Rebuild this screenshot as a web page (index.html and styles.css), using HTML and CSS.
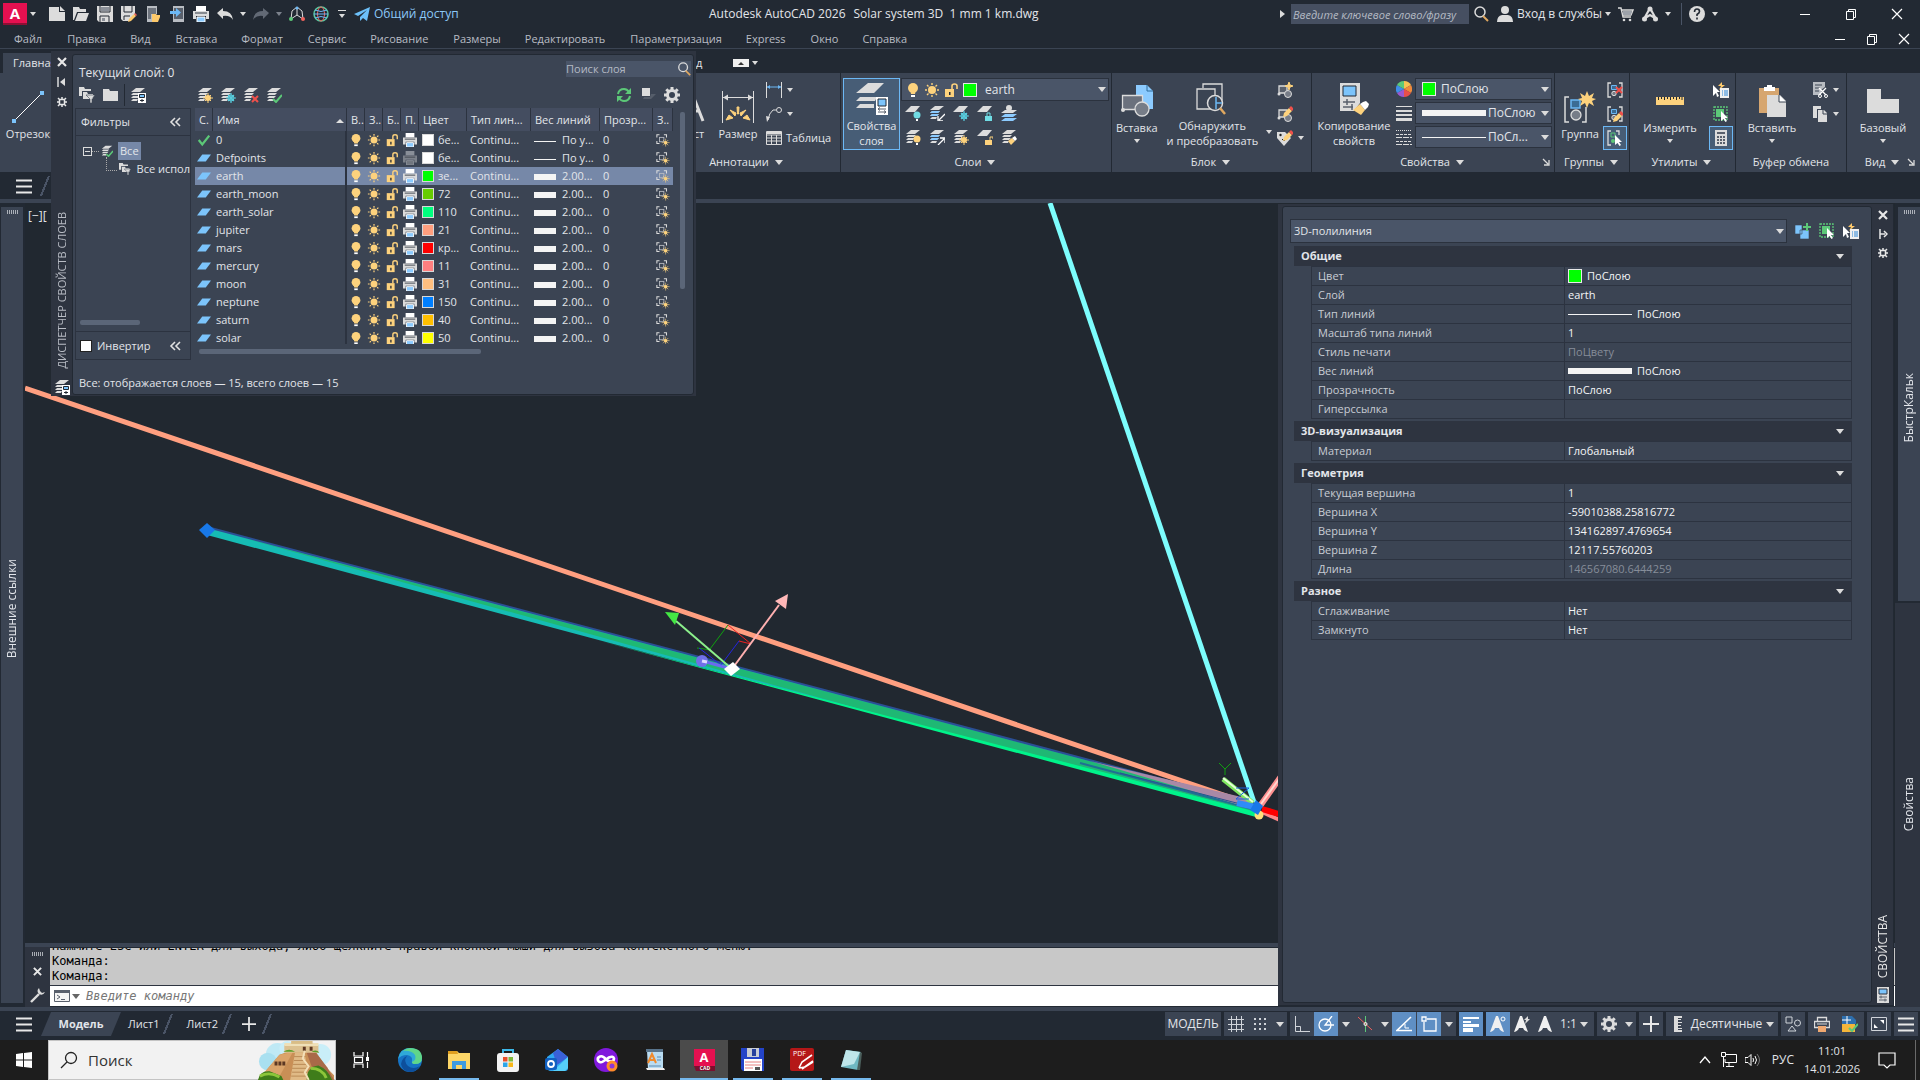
FILE: index.html
```html
<!DOCTYPE html>
<html lang="ru">
<head>
   <meta charset="UTF-8">
   <meta name="viewport" content="width=device-width, initial-scale=1.0">
   <title>Autodesk AutoCAD 2026</title>
   <link rel="stylesheet" href="styles.css">
</head>
<body>

   <!-- Набор значков -->
   <svg width="0" height="0" class="sprite">
       <symbol id="new" viewBox="0 0 16 16"><path d="M0 1h10v5h6v9H0z" fill="#dcdcdc"/><path d="M11 0l5 5h-5z" fill="#dcdcdc"/></symbol>
       <symbol id="open" viewBox="0 0 16 16"><path d="M0 1h6l1 2h6v3H4L1 14H0z" fill="#dcdcdc"/><path d="M5 7h11l-3 8H2z" fill="#dcdcdc"/></symbol>
       <symbol id="save" viewBox="0 0 16 16"><path d="M0 0h16v16H2l-2-2z" fill="#dcdcdc"/><path d="M3 0v6h10V0M3 16v-6h9v6" fill="none" stroke="#222933"/><path d="M4 1h8v4H4zM5 12h3v3H5z" fill="#8a8f98"/></symbol>
       <symbol id="saveas" viewBox="0 0 16 16"><path d="M0 0h14v8l-5 7H2l-2-2z" fill="#dcdcdc"/><path d="M3 0v6h8V0M3 14v-4h6" fill="none" stroke="#222933"/><path d="M7 16l1-3 5-5 2 2-5 5z" fill="#fdc96b"/><path d="M13 8l1-1 2 2-1 1z" fill="#f0625d"/></symbol>
       <symbol id="mobopen" viewBox="0 0 16 16"><path d="M2 0h10v8H8v8H2z" fill="#b8bcc2"/><path d="M3 2h8v6H6v5H3z" fill="#6e747e"/><path d="M7 8h4l1 1h3v2l-2 5H7z" fill="#fdc96b"/></symbol>
       <symbol id="mobsave" viewBox="0 0 16 16"><path d="M4 0h11v16H4z" fill="#b8bcc2"/><path d="M5 2h9v11H5z" fill="#59606c"/><path d="M1 5h6V2l5 4.500-5 4.500V8H1z" fill="#6cb8f5"/></symbol>
       <symbol id="print" viewBox="0 0 16 16"><path d="M3 0h10v5H3z" fill="#fff"/><path d="M0 5h16v8h-3v-3H3v3H0z" fill="#dcdcdc"/><path d="M2 7h12" stroke="#333a46"/><path d="M4 11h8v5H4z" fill="#8ccbff" stroke="#fff"/></symbol>
       <symbol id="undo" viewBox="0 0 16 16"><path d="M0 7l6-5v3q9 0 10 9-3-5-10-4v3z" fill="#dcdcdc"/></symbol>
       <symbol id="redo" viewBox="0 0 16 16"><path d="M16 7l-6-5v3Q1 5 0 14q3-5 10-4v3z" fill="#626975"/></symbol>
       <symbol id="ucs" viewBox="0 0 16 16"><path d="M8 2v7M8 9l-6 4M8 9l6 4" stroke="#dcdcdc" fill="none"/><path d="M2 13L3 5l5-4 5 4 1 8" stroke="#dcdcdc" fill="none"/><circle cx="8" cy="2" r="1.500" fill="#6cb8f5"/><circle cx="2" cy="13" r="2" fill="#5cc878"/><circle cx="14" cy="13" r="2" fill="#f0625d"/></symbol>
       <symbol id="globe" viewBox="0 0 16 16"><circle cx="8" cy="8" r="7" fill="none" stroke="#5cc8a0" stroke-width="1.500"/><ellipse cx="8" cy="8" rx="3.500" ry="7" fill="none" stroke="#f0625d"/><path d="M1 8h14M2 4q6 3 12 0M2 12q6-3 12 0" fill="none" stroke="#6cb8f5"/></symbol>
       <symbol id="plane" viewBox="0 0 16 16"><path d="M16 1L0 8l4 2 9-6-7 7v4l3-3 4 3z" fill="#6cc0fa"/></symbol>
       <symbol id="search" viewBox="0 0 16 16"><circle cx="7" cy="6" r="5" fill="none" stroke="#dcdcdc" stroke-width="1.500"/><path d="M10 10l5 5" stroke="#e0a860" stroke-width="2"/></symbol>
       <symbol id="user" viewBox="0 0 16 16"><circle cx="8" cy="4" r="4" fill="#dcdcdc"/><path d="M0 16q0-6 5-7h6q5 1 5 7z" fill="#dcdcdc"/></symbol>
       <symbol id="cart" viewBox="0 0 16 16"><path d="M0 2h3l2 9h8M4 4h11l-2 5H5" fill="none" stroke="#dcdcdc" stroke-width="1.400"/><path d="M5 5h9l-1 4H5z" fill="#9da2aa"/><circle cx="6" cy="14" r="1.300" fill="#dcdcdc"/><circle cx="12" cy="14" r="1.300" fill="#dcdcdc"/></symbol>
       <symbol id="app" viewBox="0 0 16 16"><path d="M8 2L2 13M8 2l6 11M3 12l5-3 5 3" fill="none" stroke="#dcdcdc" stroke-width="2.200"/><circle cx="8" cy="3" r="2.500" fill="#dcdcdc"/><circle cx="2.500" cy="13" r="2.500" fill="#dcdcdc"/><circle cx="13.500" cy="13" r="2.500" fill="#dcdcdc"/></symbol>
       <symbol id="help" viewBox="0 0 16 16"><circle cx="8" cy="8" r="8" fill="#dcdcdc"/><path d="M5.500 6q0-3 2.500-3t2.500 2.500Q10.500 7 8 8.500V10M8 11.500v2" fill="none" stroke="#222933" stroke-width="1.600"/></symbol>
       <symbol id="min" viewBox="0 0 12 12"><path d="M1 6.500h10" stroke="#fff"/></symbol>
       <symbol id="restore" viewBox="0 0 12 12"><path d="M1.500 3.500h7v8h-7zM3.500 3V1.500h7v8H9" fill="none" stroke="#fff"/></symbol>
       <symbol id="close" viewBox="0 0 12 12"><path d="M1 1l10 10M11 1L1 11" stroke="#fff" stroke-width="1.200"/></symbol>
       <symbol id="xbold" viewBox="0 0 10 10"><path d="M1 1l8 8M9 1L1 9" stroke="#e8e8e8" stroke-width="2.200"/></symbol>
       <symbol id="pin" viewBox="0 0 10 10"><path d="M1 0v10" stroke="#dcdcdc" stroke-width="1.500"/><path d="M3 5l5-4v8z" fill="#dcdcdc"/></symbol>
       <symbol id="pinr" viewBox="0 0 10 10"><path d="M2 0v10M2 5h5" stroke="#e8e8e8" stroke-width="1.500"/><path d="M6 2l3 3-3 3" fill="none" stroke="#e8e8e8" stroke-width="1.500"/></symbol>
       <symbol id="sprocket" viewBox="0 0 10 10"><path d="M2.500 2.500h5v5h-5zM1 1l1.500 1.500M9 1L7.500 2.500M1 9l1.500-1.500M9 9L7.500 7.500M5 0v2M5 8v2M0 5h2M8 5h2" fill="none" stroke="#e8e8e8" stroke-width="1.500"/></symbol>
       <symbol id="gear" viewBox="0 0 16 16"><path d="M8 0v16M0 8h16M2.300 2.300l11.400 11.400M13.700 2.300L2.300 13.700" stroke="#dcdcdc" stroke-width="3"/><circle cx="8" cy="8" r="4.500" fill="none" stroke="#dcdcdc" stroke-width="3"/><circle cx="8" cy="8" r="3" fill="#3b4453"/></symbol>
       <symbol id="refresh" viewBox="0 0 16 16"><path d="M2 7q1-5 6-5 3 0 5 3M14 9q-1 5-6 5-3 0-5-3" fill="none" stroke="#5cc878" stroke-width="2"/><path d="M15 1v6H9zM1 15V9h6z" fill="#5cc878"/></symbol>
       <symbol id="bulb" viewBox="0 0 16 16"><circle cx="8" cy="6" r="5" fill="#fdd27d"/><path d="M5 8h6l-1 4H6z" fill="#fdd27d"/><path d="M6 13h4v2H6z" fill="#fff"/></symbol>
       <symbol id="sun" viewBox="0 0 16 16"><circle cx="8" cy="8" r="4" fill="#fdd27d"/><path d="M8 1v2M8 13v2M1 8h2M13 8h2M3 3l1.500 1.500M11.500 11.500L13 13M13 3l-1.500 1.500M4.500 11.500L3 13" stroke="#fdd27d" stroke-width="1.400"/></symbol>
       <symbol id="lock" viewBox="0 0 16 16"><path d="M2 7h9v8H2z" fill="#fdd27d"/><path d="M9 7V4q0-2 2.500-2T14 4v3" fill="none" stroke="#fdd27d" stroke-width="1.600"/><path d="M6 10h1.500v3H6z" fill="#222933"/></symbol>
       <symbol id="sheet" viewBox="0 0 16 16"><path d="M6 4h10l-6 8H0z" fill="#7cc4fb"/></symbol>
       <symbol id="check" viewBox="0 0 16 16"><path d="M2 8l4 5 8-10" fill="none" stroke="#5cc878" stroke-width="2.600"/></symbol>
       <symbol id="vpfreeze" viewBox="0 0 16 16"><path d="M1 5V2h3M9 2h3v3M1 9v3h3" fill="none" stroke="#dcdcdc" stroke-width="1.200"/><rect x="4" y="5" width="5" height="5" fill="none" stroke="#b8bcc2"/><circle cx="11" cy="11" r="2" fill="#fdd27d"/><path d="M11 6.500v9M6.500 11h9M8 8l6 6M14 8l-6 6" stroke="#fdd27d" stroke-width=".7"/></symbol>
       <symbol id="layer" viewBox="0 0 16 16"><path d="M6 1h9l-5 4H1zM3 6h8l-2 2H1zM3 9h7l-2 2H1zM3 12h5l-1 2H1z" fill="#dcdcdc"/></symbol>
       <symbol id="onelayer" viewBox="0 0 16 16"><path d="M6 1h9l-5 6H0z" fill="#dcdcdc"/></symbol>
       <symbol id="b-sun" viewBox="0 0 16 16"><circle cx="11" cy="11" r="3" fill="#fdd27d"/><path d="M11 6v10M6 11h10M8 8l6 6M14 8l-6 6" stroke="#fdd27d"/></symbol>
       <symbol id="b-snow" viewBox="0 0 16 16"><circle cx="11" cy="11" r="3" fill="none" stroke="#58ccdc"/><path d="M11 6v10M6 11h10M8 8l6 6M14 8l-6 6" stroke="#58ccdc" stroke-width="1.200"/></symbol>
       <symbol id="b-x" viewBox="0 0 16 16"><path d="M9 9l6 6M15 9l-6 6" stroke="#f0504b" stroke-width="2"/></symbol>
       <symbol id="b-check" viewBox="0 0 16 16"><path d="M7 12l3 3 6-7" fill="none" stroke="#5cc878" stroke-width="2"/></symbol>
       <symbol id="b-bulb" viewBox="0 0 16 16"><circle cx="12" cy="10" r="3.500" fill="#fdd27d"/><path d="M11 14h2v2h-2z" fill="#fff"/></symbol>
       <symbol id="b-bulbc" viewBox="0 0 16 16"><circle cx="12" cy="10" r="3.500" fill="#70dce4"/><path d="M11 14h2v2h-2z" fill="#fff"/></symbol>
       <symbol id="b-lock" viewBox="0 0 16 16"><path d="M8 11h7v5H8z" fill="#fdd27d"/><path d="M13 11V8h3v2" fill="none" stroke="#fdd27d"/></symbol>
       <symbol id="b-lockc" viewBox="0 0 16 16"><path d="M8 11h7v5H8z" fill="#70dce4"/><path d="M10 11V8h3v3" fill="none" stroke="#70dce4"/></symbol>
       <symbol id="b-arrow" viewBox="0 0 16 16"><path d="M16 9l-6 6M9 11v5h5" fill="none" stroke="#fff" stroke-width="1.300"/></symbol>
       <symbol id="b-arrowup" viewBox="0 0 16 16"><path d="M9 16l6-6M11 9h5v5" fill="none" stroke="#fff" stroke-width="1.300"/></symbol>
       <symbol id="b-blue" viewBox="0 0 16 16"><path d="M3 9h7l-2 2H1zM3 6h8l-2 2H1z" fill="#8ccbff"/></symbol>
       <symbol id="b-brush" viewBox="0 0 16 16"><path d="M7 12l4-3 3 3-4 4z" fill="#fdd27d"/><path d="M11 9l3-2 2 3-2 2z" fill="#fff"/></symbol>
       <symbol id="b-pencil" viewBox="0 0 16 16"><path d="M6 11l1-4 5-5 3 3-5 5z" fill="#fdd27d"/><path d="M12 2l2-2 3 3-2 2z" fill="#f0504b"/></symbol>
       <symbol id="b-star" viewBox="0 0 16 16"><path d="M12 0l1 3 3 1-3 1-1 3-1-3-3-1 3-1z" fill="#fdd27d" stroke="#fdd27d"/></symbol>
       <symbol id="b-funnel" viewBox="0 0 16 16"><path d="M7 8h9l-3 4v4h-2v-4z" fill="#dcdcdc" stroke="#3b4453" stroke-width=".6"/></symbol>
       <symbol id="b-card" viewBox="0 0 16 16"><path d="M8 6h8v10H8z" fill="#fff"/><path d="M9.500 7.500h5v3h-5z" fill="#7cc4fb" stroke="#222933"/><path d="M10 13.500h4M12 12v3" stroke="#222933"/></symbol>
       <symbol id="folder" viewBox="0 0 16 16"><path d="M0 2h6l1 2h8v10H0z" fill="#dcdcdc"/></symbol>
       <symbol id="folders" viewBox="0 0 16 16"><path d="M0 0h5l1 2h6v2H3v5H0z" fill="#dcdcdc"/><path d="M4 5h4l1 2h5v5H4z" fill="#dcdcdc"/></symbol>
       <symbol id="hand" viewBox="0 0 16 16"><path d="M2 1h8v8H2z" fill="#dcdcdc"/><path d="M11 7h5l-5 5H3l1-2h6z" fill="#555d6a"/></symbol>
       <symbol id="block" viewBox="0 0 16 16"><path d="M2 4h8v7H2z" fill="#59606c" stroke="#dcdcdc" stroke-width="1.300"/><circle cx="11" cy="12" r="3.500" fill="#777d88" stroke="#dcdcdc"/><circle cx="2" cy="12" r="1.500" fill="#dcdcdc"/></symbol>
       <symbol id="tag" viewBox="0 0 16 16"><path d="M0 2h8l6 6-7 8-7-8z" fill="#dcdcdc"/><circle cx="3.500" cy="5" r="1.200" fill="#222"/><path d="M5 9l2 2 3-3" stroke="#222" fill="none"/></symbol>
       <symbol id="dim" viewBox="0 0 16 16"><path d="M.5 0v16M15.500 0v16" stroke="#dcdcdc"/><path d="M1 5h14" stroke="#6cb8f5"/><path d="M1 5l3-2v4zM15 5l-3-2v4z" fill="#6cb8f5"/></symbol>
       <symbol id="leader" viewBox="0 0 16 16"><circle cx="13" cy="4" r="2.500" fill="none" stroke="#dcdcdc"/><path d="M10 4H7q-4 3-5 10" fill="none" stroke="#dcdcdc"/><path d="M0 10l4 1-3 5z" fill="#dcdcdc"/></symbol>
       <symbol id="table" viewBox="0 0 16 16"><path d="M.5 1.500h15v13H.5zM.5 5h15M.5 8h15M.5 11h15M5.500 5v9M10.500 5v9" fill="none" stroke="#dcdcdc"/><path d="M1 2h14v2H1z" fill="#dcdcdc"/></symbol>
       <symbol id="wheel" viewBox="0 0 16 16"><path d="M8 8V0a8 8 0 0 1 7 4z" fill="#f7c252"/><path d="M8 8l7-4a8 8 0 0 1 0 8z" fill="#f08a3c"/><path d="M8 8l7 4a8 8 0 0 1-7 4z" fill="#e84f4a"/><path d="M8 8v8a8 8 0 0 1-7-4z" fill="#9b59d0"/><path d="M8 8l-7 4a8 8 0 0 1 0-8z" fill="#3f8ee8"/><path d="M8 8L1 4a8 8 0 0 1 7-4z" fill="#5cc878"/></symbol>
       <symbol id="weights" viewBox="0 0 16 16"><path d="M0 1h16v1H0zM0 5h16v2H0zM0 9h16v2H0zM0 13h16v3H0z" fill="#dcdcdc"/></symbol>
       <symbol id="types" viewBox="0 0 16 16"><path d="M0 1.500h16" stroke="#dcdcdc" stroke-dasharray="1 1"/><path d="M0 5.500h16M0 12.500h16" stroke="#dcdcdc" stroke-dasharray="3 1"/><path d="M0 8.500h16M0 15.500h16" stroke="#dcdcdc" stroke-dasharray="6 1"/></symbol>
       <symbol id="grp" viewBox="0 0 16 16"><path d="M4 1H1v14h3M12 1h3v14h-3" fill="none" stroke="#dcdcdc" stroke-width="1.300"/><path d="M4.500 3.500h5v4h-5z" fill="#3b6c94" stroke="#6cb8f5"/><circle cx="7" cy="11.500" r="2.200" fill="#777d88" stroke="#dcdcdc"/></symbol>
       <symbol id="grpsel" viewBox="0 0 16 16"><path d="M4 1H1v14h3M9 1h3v4" fill="none" stroke="#dcdcdc" stroke-width="1.300"/><path d="M4 3h4v4H4z" fill="none" stroke="#5cc878"/><circle cx="6" cy="11" r="2" fill="#5cc878"/></symbol>
       <symbol id="b-cursor" viewBox="0 0 16 16"><path d="M8 5v10l2.500-2 2 3 1.500-1-2-3h3z" fill="#fff"/></symbol>
       <symbol id="quick-props" viewBox="0 0 16 16"><path d="M0 3v11l3-3 1 4 2-1-2-4h3z" fill="#fff"/><path d="M9 0L5 4h3L6 8l6-5H9z" fill="#fdc96b"/><path d="M7 6h9v10H7z" fill="#f0f0f0"/><path d="M9 9h1M9 11h1M9 13h1M11 9h4M11 11h4M11 13h4" stroke="#2b86d8"/></symbol>
       <symbol id="selall" viewBox="0 0 16 16"><path d="M1 1h13v13H1z" fill="none" stroke="#5cc878" stroke-width="1.300" stroke-dasharray="2 1"/><path d="M3 3h8v8H3z" fill="#5cc878"/></symbol>
       <symbol id="addsel" viewBox="0 0 16 16"><path d="M0 2h7v9H0zM5 7h9v9H5z" fill="#7cc4fb" stroke="#3b4453" stroke-width=".6"/><path d="M12 0v8M8 4h8" stroke="#5cc878" stroke-width="2"/></symbol>
       <symbol id="calc" viewBox="0 0 16 16"><path d="M2 0h12v16H2z" fill="#dcdcdc"/><path d="M4 2h8v2H4zM4 6h2v2H4zM7 6h2v2H7zM10 6h2v2h-2zM4 9h2v2H4zM7 9h2v2H7zM10 9h2v2h-2zM4 12h2v2H4zM7 12h2v2H7zM10 12h2v2h-2z" fill="#59606c"/></symbol>
       <symbol id="cut" viewBox="0 0 16 16"><path d="M1 0h12v5l-4 3v5H1z" fill="#b8bcc2"/><path d="M3 3h7M3 6h5M3 9h4" stroke="#3b4453"/><path d="M7 6l7 7M14 6l-7 7" stroke="#fff" stroke-width="1.400"/><circle cx="8" cy="14" r="1.500" fill="none" stroke="#fff"/><circle cx="14" cy="14" r="1.500" fill="none" stroke="#fff"/></symbol>
       <symbol id="copy" viewBox="0 0 16 16"><path d="M1 0h8v3H5v9H1z" fill="#dcdcdc"/><path d="M6 4h6l3 3v9H6z" fill="#dcdcdc"/><path d="M11 4v4h4" fill="none" stroke="#3b4453"/></symbol>
       <symbol id="corner" viewBox="0 0 8 8"><path d="M1 1l5 5M7 2v5H2" fill="none" stroke="#dcdcdc" stroke-width="1.300"/></symbol>
       <symbol id="burger" viewBox="0 0 16 16"><path d="M0 2.500h16M0 8.500h16M0 14.500h16" stroke="#e8e8e8" stroke-width="2"/></symbol>
       <symbol id="chev" viewBox="0 0 12 10"><path d="M6 1L2 5l4 4M11 1L7 5l4 4" fill="none" stroke="#e0e0e0" stroke-width="1.600"/></symbol>
       <symbol id="palette" viewBox="0 0 12 16"><path d="M0 0h12v16H0z" fill="#dcdcdc"/><path d="M2 2h8v5H2z" fill="#7cc4fb" stroke="#2e3440"/><path d="M2 10h8M2 13h8M4 8.500v3M8 11.500v3" stroke="#59606c"/></symbol>
       <symbol id="wrench" viewBox="0 0 16 16"><path d="M1 15l8-8" stroke="#dcdcdc" stroke-width="2.400"/><path d="M9 1q-3 3 0 6 4 2 6-2l-3 1-2-2z" fill="#dcdcdc"/></symbol>
       <symbol id="prompt" viewBox="0 0 16 12"><path d="M.5.5h15v11H.5z" fill="#f4f4f4" stroke="#59606c"/><path d="M0 0h16v3H0z" fill="#59606c"/><path d="M3 5l3 2-3 2M7 9.500h4" fill="none" stroke="#59606c"/></symbol>
       <!-- строка состояния -->
       <symbol id="s-grid" viewBox="0 0 16 16"><path d="M3.500 0v16M8.500 0v16M13.500 0v16M0 3.500h16M0 8.500h16M0 13.500h16" stroke="#d0d4da"/></symbol>
       <symbol id="s-dots" viewBox="0 0 16 16"><path d="M2 3h12M2 8h12M2 13h12" stroke="#d0d4da" stroke-width="2" stroke-dasharray="2 3"/></symbol>
       <symbol id="s-ortho" viewBox="0 0 16 16"><path d="M1.500 0v15.500H16M1.500 10.500h5v5" fill="none" stroke="#d0d4da"/></symbol>
       <symbol id="s-polar" viewBox="0 0 16 16"><circle cx="7" cy="9" r="6" fill="none" stroke="#fff" stroke-width="1.300"/><path d="M14 0L7 9h9" fill="none" stroke="#fff" stroke-width="1.300"/></symbol>
       <symbol id="s-iso" viewBox="0 0 16 16"><path d="M8.500 0v16" stroke="#5cc878"/><path d="M1 1l14 13" stroke="#f0625d"/><circle cx="8.500" cy="8" r="1.500" fill="none" stroke="#fff"/></symbol>
       <symbol id="s-track" viewBox="0 0 16 16"><path d="M15 1L1 14.500h15" fill="none" stroke="#fff" stroke-width="1.600"/><path d="M9 8v4h4" fill="none" stroke="#fff"/></symbol>
       <symbol id="s-osnap" viewBox="0 0 16 16"><path d="M1 1h4v4H1zM6 3h9v12H3V6" fill="none" stroke="#fff" stroke-width="1.300"/></symbol>
       <symbol id="s-lwt" viewBox="0 0 16 16"><path d="M0 1h16v2H0zM0 5h8v2H0zM0 8h16v3H0zM0 12h10v4H0z" fill="#fff"/></symbol>
       <symbol id="s-ann" viewBox="0 0 16 16"><path d="M6 0h2l6 16q-4-1-5-4H5q-1 3-5 4z" fill="#f0f0f0"/></symbol>
       <symbol id="s-ring" viewBox="0 0 16 16"><circle cx="13" cy="3" r="2" fill="none" stroke="#fff"/></symbol>
       <symbol id="s-flash" viewBox="0 0 16 16"><path d="M14 0l-4 4h2l-1 4 5-5h-2z" fill="#dcdcdc"/></symbol>
       <symbol id="s-plus" viewBox="0 0 16 16"><path d="M8 0v16M0 8h16" stroke="#e8e8e8" stroke-width="2"/></symbol>
       <symbol id="s-ruler" viewBox="0 0 8 16"><path d="M0 0h8v2H4v1h3v1H4v2h4v1H4v2h3v1H4v2h4v1H4v1h4v2H0z" fill="#dcdcdc"/></symbol>
       <symbol id="s-iso2" viewBox="0 0 16 16"><path d="M1 1h6v6H1zM7 10l-4 5h8z" fill="none" stroke="#d0d4da"/><circle cx="12.500" cy="7" r="3" fill="none" stroke="#d0d4da"/></symbol>
       <symbol id="s-print" viewBox="0 0 16 16"><path d="M3.500 1.500h9v4h-9zM.5 5.500h15v6H.5z" fill="none" stroke="#dcdcdc" stroke-width="1.300"/><path d="M3 8h10" stroke="#dcdcdc"/><path d="M4 10h8v6H4z" fill="#f0a870"/></symbol>
       <symbol id="s-dwg" viewBox="0 0 16 16"><path d="M0 0h10l4 4v4H0z" fill="#2d6fae"/><path d="M0 8h13v8H0z" fill="#f4b63a"/><path d="M5 0v8M0 4h9" stroke="#fff"/><path d="M7 12l3 3 6-7" fill="none" stroke="#5cc878" stroke-width="2"/></symbol>
       <symbol id="s-full" viewBox="0 0 16 16"><path d="M.5 1.500h15v13H.5z" fill="none" stroke="#d0d4da"/><path d="M9 4h4v4zM3 8v4h4z" fill="#fff"/></symbol>
       <!-- крупные -->
       <symbol id="L-line" viewBox="0 0 32 32"><path d="M2 30L30 2" stroke="#fff"/><path d="M0 28h4v4H0zM28 0h4v4h-4z" fill="#7cc4fb"/></symbol>
       <symbol id="L-text" viewBox="0 0 32 32"><path d="M4 30L15 2h3l11 28M9 20h15" fill="none" stroke="#dcdcdc" stroke-width="3"/></symbol>
       <symbol id="L-dim" viewBox="0 0 32 32"><path d="M.5 0v32M31.500 0v32M1 6.500h30" stroke="#dcdcdc"/><path d="M1 6.500l5-3v6zM31 6.500l-5-3v6z" fill="#dcdcdc"/><path d="M4 29l7-2-4-3zM28 29l-7-2 4-3zM8 19l5 6 1-3zM24 19l-5 6-1-3zM15 16h2l-.5 7h-1z" fill="#fdd27d" stroke="#fdd27d"/></symbol>
       <symbol id="L-layers" viewBox="0 0 32 32"><path d="M12 0h16L18 10H0zM4 14h17l-2 4H0zM4 21h14v4H0z" fill="#dcdcdc"/><path d="M20 14h12v18H20z" fill="#fff"/><path d="M22 16h8v7h-8z" fill="#7cc4fb" stroke="#222933"/><path d="M22 26h8M24 24.500L22 26l2 1.500M22 29h8M28 27.500l2 1.500-2 1.500" stroke="#59606c" fill="none"/></symbol>
       <symbol id="L-insert" viewBox="0 0 32 32"><path d="M15 0h11l6 6v18H15z" fill="#8ccbff"/><path d="M26 0v6h6" fill="none" stroke="#2e6c9c"/><path d="M1.500 10.500h20v14h-20z" fill="#6b717d" stroke="#dcdcdc" stroke-width="1.300"/><circle cx="21" cy="24" r="7" fill="#777d88" stroke="#dcdcdc" stroke-width="1.300"/><circle cx="2" cy="25" r="2" fill="#dcdcdc"/></symbol>
       <symbol id="L-detect" viewBox="0 0 32 32"><path d="M7 5V1h19v16M1 6h18v20H1z" fill="none" stroke="#dcdcdc" stroke-width="1.300"/><circle cx="19" cy="20" r="7.500" fill="#3b4453" stroke="#dcdcdc" stroke-width="1.500"/><path d="M20 14v12M20 20h6" stroke="#6cb8f5" stroke-width="1.500"/><path d="M24 25l5 6" stroke="#e0a860" stroke-width="2.500"/></symbol>
       <symbol id="L-match" viewBox="0 0 32 32"><path d="M2 0h20v20l-6 8H2z" fill="#dcdcdc"/><path d="M5 3h13v10H5z" fill="#7cc4fb" stroke="#222933"/><path d="M5 19h12M5 24h10M9 16v6M14 21v6" stroke="#59606c" stroke-width="1.500"/><path d="M15 27l7-6 5 6-4 5z" fill="#fdd27d"/><path d="M22 21l3-2 3-1 3 3-1 3-3 3z" fill="#fff"/></symbol>
       <symbol id="L-group" viewBox="0 0 32 32"><path d="M5 6H1v25h4M18 31h4V16" fill="none" stroke="#dcdcdc" stroke-width="1.500"/><path d="M7 9h9v8H7z" fill="#3b6c94" stroke="#6cb8f5" stroke-width="1.500"/><circle cx="12" cy="24" r="5" fill="#777d88" stroke="#dcdcdc" stroke-width="1.300"/><path d="M23 0l2 5 5-3-2 5 4 1-4 2 2 5-5-3-2 5-2-5-5 3 2-5-4-2 4-1-2-5 5 3z" fill="#fdd27d"/></symbol>
       <symbol id="L-ruler" viewBox="0 0 32 32"><path d="M2 12h28v8H2z" fill="#fdd27d"/><path d="M4.500 12v3M7.500 12v2M10.500 12v3M13.500 12v2M16.500 12v3M19.500 12v2M22.500 12v3M25.500 12v2M28 12v3" stroke="#222933"/></symbol>
       <symbol id="L-paste" viewBox="0 0 32 32"><path d="M3 3h20v25H3z" fill="#d6a670"/><path d="M8 2h3V0h5v2h3v4H8z" fill="#fff"/><path d="M11 10h13l6 6v16H11z" fill="#dcdcdc"/><path d="M23 10v7h7" fill="#fff" stroke="#3b4453"/></symbol>
       <symbol id="L-base" viewBox="0 0 32 32"><path d="M0 4h14v10h18v14H0z" fill="#dcdcdc"/></symbol>
   </svg>

   <header class="titlebar">
       <div class="quick">
           <button class="logo" aria-label="Приложение">A</button><i class="caret logo-caret"></i>
           <button class="cell"><svg><use href="#new"/></svg></button>
           <button class="cell"><svg><use href="#open"/></svg></button>
           <button class="cell"><svg><use href="#save"/></svg></button>
           <button class="cell"><svg><use href="#saveas"/></svg></button>
           <button class="cell"><svg><use href="#mobopen"/></svg></button>
           <button class="cell"><svg><use href="#mobsave"/></svg></button>
           <button class="cell"><svg><use href="#print"/></svg></button>
           <button class="cell"><svg><use href="#undo"/></svg></button><i class="caret"></i>
           <button class="cell"><svg><use href="#redo"/></svg></button><i class="caret dim"></i>
           <button class="cell"><svg><use href="#ucs"/></svg></button>
           <button class="cell"><svg><use href="#globe"/></svg></button><i class="caret more"></i>
           <button class="share"><svg><use href="#plane"/></svg>Общий доступ</button>
       </div>
       <div class="doc-title"><span>Autodesk AutoCAD 2026</span><span>Solar system 3D&nbsp; 1 mm 1 km.dwg</span></div>
       <div class="info">
           <i class="tri-right"></i>
           <input type="text" class="help-search" placeholder="Введите ключевое слово/фразу" aria-label="Поиск в справке">
           <button class="cell"><svg><use href="#search"/></svg></button>
           <button class="signin"><svg><use href="#user"/></svg>Вход в службы<i class="caret"></i></button>
           <button class="cell"><svg><use href="#cart"/></svg></button>
           <button class="cell"><svg><use href="#app"/></svg></button><i class="caret"></i>
           <span class="vsep"></span>
           <button class="cell"><svg><use href="#help"/></svg></button><i class="caret"></i>
       </div>
       <div class="win-controls">
           <button aria-label="Свернуть"><svg><use href="#min"/></svg></button>
           <button aria-label="Восстановить"><svg><use href="#restore"/></svg></button>
           <button aria-label="Закрыть"><svg><use href="#close"/></svg></button>
       </div>
   </header>

   <nav class="menubar">
       <button>Файл</button><button>Правка</button><button>Вид</button><button>Вставка</button><button>Формат</button><button>Сервис</button><button>Рисование</button><button>Размеры</button><button>Редактировать</button><button>Параметризация</button><button>Express</button><button>Окно</button><button>Справка</button>
       <div class="doc-controls">
           <button aria-label="Свернуть"><svg><use href="#min"/></svg></button>
           <button aria-label="Восстановить"><svg><use href="#restore"/></svg></button>
           <button aria-label="Закрыть"><svg><use href="#close"/></svg></button>
       </div>
   </nav>

   <div class="ribbon-tabs">
       <button class="tab">Главная</button>
       <div class="tabs-end"><span>д</span><button class="collapse" aria-label="Свернуть ленту"></button><i class="caret"></i></div>
   </div>

   <div class="ribbon">
       <section class="panel draw">
           <div class="panel-body"><button class="big"><svg><use href="#L-line"/></svg>Отрезок</button></div>
       </section>
       <section class="panel annot">
           <div class="panel-body">
               <button class="big"><svg><use href="#L-text"/></svg>Текст</button>
               <button class="big"><svg><use href="#L-dim"/></svg>Размер</button>
               <div class="stack">
                   <button class="small"><svg><use href="#dim"/></svg><i class="caret"></i></button>
                   <button class="small"><svg><use href="#leader"/></svg><i class="caret"></i></button>
                   <button class="small"><svg><use href="#table"/></svg><span>Таблица</span></button>
               </div>
           </div>
           <div class="panel-title">Аннотации<i class="caret wide"></i></div>
       </section>
       <section class="panel layers">
           <div class="panel-body">
               <button class="big on"><svg><use href="#L-layers"/></svg>Свойства<br>слоя</button>
               <div class="layer-tools">
                   <div class="combo layer-combo">
                       <svg><use href="#bulb"/></svg><svg><use href="#sun"/></svg><svg><use href="#lock"/></svg><b class="swatch"></b>
                       <select aria-label="Слой"><option>earth</option></select><i class="caret wide"></i>
                   </div>
                   <div class="icon-row">
                       <button><svg><use href="#onelayer"/><use href="#b-bulbc"/></svg></button>
                       <button><svg><use href="#layer"/><use href="#b-blue"/><use href="#b-arrow"/></svg></button>
                       <button><svg><use href="#onelayer"/><use href="#b-snow"/></svg></button>
                       <button><svg><use href="#onelayer"/><use href="#b-lockc"/></svg></button>
                       <button><svg viewBox="0 0 16 16"><path d="M4 9h12l-4 3H0zM4 13h12l-4 3H0z" fill="#8ccbff"/><path d="M4 5h12l-4 3H0z" fill="#dcdcdc"/><circle cx="8" cy="3" r="3" fill="#dcdcdc"/></svg></button>
                   </div>
                   <div class="icon-row">
                       <button><svg><use href="#layer"/><use href="#b-bulb"/></svg></button>
                       <button><svg><use href="#layer"/><use href="#b-blue"/><use href="#b-arrowup"/></svg></button>
                       <button><svg><use href="#layer"/><use href="#b-sun"/></svg></button>
                       <button><svg><use href="#onelayer"/><use href="#b-lock"/></svg></button>
                       <button><svg><use href="#layer"/><use href="#b-brush"/></svg></button>
                   </div>
               </div>
           </div>
           <div class="panel-title">Слои<i class="caret wide"></i></div>
       </section>
       <section class="panel block">
           <div class="panel-body">
               <button class="big"><svg><use href="#L-insert"/></svg>Вставка<i class="caret"></i></button>
               <button class="big"><svg><use href="#L-detect"/></svg>Обнаружить<br>и преобразовать</button>
               <i class="caret detect-caret"></i>
               <div class="stack">
                   <button class="small"><svg><use href="#block"/><use href="#b-star"/></svg></button>
                   <button class="small"><svg><use href="#block"/><use href="#b-pencil"/></svg></button>
                   <button class="small"><svg><use href="#tag"/><use href="#b-pencil"/></svg><i class="caret"></i></button>
               </div>
           </div>
           <div class="panel-title">Блок<i class="caret wide"></i></div>
       </section>
       <section class="panel properties">
           <div class="panel-body">
               <button class="big"><svg><use href="#L-match"/></svg>Копирование<br>свойств</button>
               <div class="prop-rows">
                   <div class="prop-row"><svg><use href="#wheel"/></svg><div class="combo"><b class="swatch"></b><select aria-label="Цвет объекта"><option>ПоСлою</option></select><i class="caret wide"></i></div></div>
                   <div class="prop-row"><svg><use href="#weights"/></svg><div class="combo"><b class="stroke thick"></b><select aria-label="Вес линий"><option>ПоСлою</option></select><i class="caret wide"></i></div></div>
                   <div class="prop-row"><svg><use href="#types"/></svg><div class="combo"><b class="stroke"></b><select aria-label="Тип линий"><option>ПоСл...</option></select><i class="caret wide"></i></div></div>
               </div>
           </div>
           <div class="panel-title">Свойства<i class="caret wide"></i><svg class="launcher"><use href="#corner"/></svg></div>
       </section>
       <section class="panel groups">
           <div class="panel-body">
               <button class="big"><svg><use href="#L-group"/></svg>Группа</button>
               <div class="stack">
                   <button class="small"><svg><use href="#grp"/><use href="#b-x" y="-4"/></svg></button>
                   <button class="small"><svg><use href="#grp"/><use href="#b-pencil" y="5"/></svg></button>
                   <button class="small on"><svg><use href="#grpsel"/><use href="#b-cursor"/></svg></button>
               </div>
           </div>
           <div class="panel-title">Группы<i class="caret wide"></i></div>
       </section>
       <section class="panel utils">
           <div class="panel-body">
               <button class="big"><svg><use href="#L-ruler"/></svg>Измерить<i class="caret"></i></button>
               <div class="stack">
                   <button class="small"><svg><use href="#quick-props"/></svg></button>
                   <button class="small"><svg><use href="#selall"/><use href="#b-cursor"/></svg></button>
                   <button class="small on"><svg><use href="#calc"/></svg></button>
               </div>
           </div>
           <div class="panel-title">Утилиты<i class="caret wide"></i></div>
       </section>
       <section class="panel clipboard">
           <div class="panel-body">
               <button class="big"><svg><use href="#L-paste"/></svg>Вставить<i class="caret"></i></button>
               <div class="stack">
                   <button class="small"><svg><use href="#cut"/></svg><i class="caret"></i></button>
                   <button class="small"><svg><use href="#copy"/></svg><i class="caret"></i></button>
               </div>
           </div>
           <div class="panel-title">Буфер обмена</div>
       </section>
       <section class="panel view">
           <div class="panel-body"><button class="big"><svg><use href="#L-base"/></svg>Базовый<i class="caret"></i></button></div>
           <div class="panel-title">Вид<i class="caret wide"></i><svg class="launcher"><use href="#corner"/></svg></div>
       </section>
   </div>

   <div class="file-tabs"><svg><use href="#burger"/></svg><i class="slash"></i></div>

   <main class="workspace">
       <aside class="dock left"><i class="grip"></i><span class="vert">Внешние ссылки</span></aside>

       <div class="center">
           <div class="viewport">
               <span class="vp-label">[−][</span>
               <svg class="scene">
                   <g transform="translate(-25 -203)" fill="none">
                       <path d="M1050 203L1256 808" stroke="#7dfdfd" stroke-width="5"/>
                       <path d="M25 388L640 597 1256 806" stroke="#ff9f80" stroke-width="5"/>
                       <path d="M207 527L1256 804v12L207 535z" fill="#16bcb4"/>
                       <path d="M240 537L1256 805v7L900 720 640 648z" fill="#1fb874"/>
                       <path d="M600 641L1256 812v5z" fill="#00f48a"/>
                       <path d="M207 527L1256 804" stroke="#2b4f94" stroke-width="2"/>
                       <path d="M1080 763L1256 810" stroke="#1f6f94" stroke-width="2"/>
                       <path d="M1090 761L1250 799v9z" fill="#a889a6"/>
                       <path d="M1120 773L1256 808" stroke="#2b4f94" stroke-width="1"/>
                       <path d="M207 523l8 7-8 8-8-8z" fill="#1878e8"/>
                       <!-- гизмо -->
                       <path d="M710 649L728 625" stroke="#0fa00f"/>
                       <path d="M697 648l14 2" stroke="#0fa00f"/>
                       <path d="M728 625l23 19-12-3" stroke="#f02020"/>
                       <path d="M739 641l-18 24-22-17" stroke="#2424e0"/>
                       <path d="M732 669L676 621" stroke="#8cf08c" stroke-width="2"/>
                       <path d="M665 612l14 1-4 12z" fill="#44e844"/>
                       <path d="M732 669L779 605" stroke="#ffb0b0" stroke-width="2"/>
                       <path d="M788 594l-2 15-11-8z" fill="#ffb8b8"/>
                       <path d="M732 669l-26-7" stroke="#6a6af0" stroke-width="3"/>
                       <circle cx="702" cy="661" r="6" fill="#7070e8"/>
                       <path d="M702 661l5 1" stroke="#dcdcff" stroke-width="3"/>
                       <path d="M733 662l7 7-9 7-7-7z" fill="#fff"/>
                       <!-- начало координат -->
                       <path d="M1219 763l6 6 6-6M1225 769v6" stroke="#10a010"/>
                       <path d="M1223 779l30 24" stroke="#80e860" stroke-width="5"/>
                       <path d="M1223 778l30 24" stroke="#e4ffd8" stroke-width="2"/>
                       <path d="M1236 788h13l-13 11h13" stroke="#1860e0"/>
                       <path d="M1260 806l22-31" stroke="#ff9090" stroke-width="6"/>
                       <path d="M1261 804l21-29" stroke="#ffd8d0" stroke-width="2"/>
                       <path d="M1262 812l20 9" stroke="#ff8888" stroke-width="4"/>
                       <path d="M1262 809l20 6" stroke="#f00" stroke-width="6"/>
                       <path d="M1237 803l18 4" stroke="#2f8cf8" stroke-width="6"/>
                       <circle cx="1259" cy="815" r="4.500" fill="#ffe07a"/>
                       <path d="M1256 800l7 6-5 9-8-5z" fill="#1878e8"/>
                   </g>
               </svg>
           </div>
           <div class="command">
               <div class="cmd-side"><i class="grip"></i><svg><use href="#xbold"/></svg><svg class="w"><use href="#wrench"/></svg></div>
               <div class="cmd-main">
                   <div class="cmd-log"><p>Нажмите ESC или ENTER для выхода, либо щелкните правой кнопкой мыши для вызова контекстного меню.</p><p>Команда:</p><p>Команда:</p></div>
                   <div class="cmd-input"><svg><use href="#prompt"/></svg><i class="caret wide grey"></i><input type="text" placeholder="Введите команду" aria-label="Командная строка"></div>
               </div>
           </div>
       </div>

       <aside class="dock-right">
           <div class="dock calc-dock"><i class="grip"></i><span class="vert">БыстрКальк</span></div>
           <div class="dock props-dock"><span class="vert">Свойства</span></div>
       </aside>

       <!-- Палитра свойств -->
       <section class="props-palette">
           <div class="props-inner">
               <div class="props-head">
                   <div class="combo type-combo"><select aria-label="Тип объекта"><option>3D-полилиния</option></select><i class="caret wide"></i></div>
                   <button class="cell"><svg><use href="#addsel"/></svg></button>
                   <button class="cell"><svg><use href="#selall"/><use href="#b-cursor"/></svg></button>
                   <button class="cell"><svg><use href="#quick-props"/></svg></button>
               </div>
               <div id="propsList" class="props-list"></div>
           </div>
           <div class="palette-bar">
               <svg><use href="#xbold"/></svg><svg><use href="#pinr"/></svg><svg><use href="#sprocket"/></svg>
               <span class="vert">СВОЙСТВА</span>
               <svg class="tall"><use href="#palette"/></svg>
           </div>
       </section>
   </main>

   <footer class="statusbar">
       <svg class="burger"><use href="#burger"/></svg>
       <div class="layout-tabs">
           <button class="active"><span>Модель</span></button><button>Лист1</button><i class="slash"></i><button>Лист2</button><i class="slash"></i>
           <button class="plus" aria-label="Новый лист"><svg><use href="#s-plus"/></svg></button><i class="slash"></i>
       </div>
       <div class="status-groups">
           <div class="sg"><button class="txt">МОДЕЛЬ</button></div>
           <div class="sg"><button><svg><use href="#s-grid"/></svg></button><button><svg><use href="#s-dots"/></svg></button><i class="caret wide"></i></div>
           <div class="sg">
               <button><svg><use href="#s-ortho"/></svg></button><button class="lit"><svg><use href="#s-polar"/></svg></button><i class="caret wide"></i>
               <button><svg><use href="#s-iso"/></svg></button><i class="caret wide"></i>
               <button class="lit"><svg><use href="#s-track"/></svg></button><button class="lit"><svg><use href="#s-osnap"/></svg></button><i class="caret wide"></i>
           </div>
           <div class="sg"><button class="lit"><svg><use href="#s-lwt"/></svg></button></div>
           <div class="sg">
               <button class="lit"><svg><use href="#s-ann"/><use href="#s-ring"/></svg></button><button><svg><use href="#s-ann"/><use href="#s-flash"/></svg></button><button><svg><use href="#s-ann"/></svg></button>
               <button class="scale">1:1<i class="caret wide"></i></button>
           </div>
           <div class="sg"><button><svg><use href="#gear"/></svg></button><i class="caret wide"></i></div>
           <div class="sg"><button><svg><use href="#s-plus"/></svg></button></div>
           <div class="sg"><button><svg class="half"><use href="#s-ruler"/></svg></button><button class="units">Десятичные<i class="caret wide"></i></button></div>
           <div class="sg"><button><svg><use href="#s-iso2"/></svg></button></div>
           <div class="sg roomy"><button><svg><use href="#s-print"/></svg></button><button><svg><use href="#s-dwg"/></svg></button></div>
           <div class="sg"><button><svg><use href="#s-full"/></svg></button></div>
           <div class="sg"><button><svg><use href="#burger"/></svg></button></div>
       </div>
   </footer>

   <div class="taskbar">
       <button class="start" aria-label="Пуск"><svg viewBox="0 0 16 16"><path d="M0 2l7-1v6.500H0zM8 1l8-1v7.500H8zM0 8.500h7V15l-7-1zM8 8.500h8V16l-8-1z" fill="#fff"/></svg></button>
       <div class="task-search">
           <svg class="loupe" viewBox="0 0 18 18"><circle cx="11" cy="7" r="5.500" fill="none" stroke="#222" stroke-width="1.300"/><path d="M7 11l-6 6" stroke="#222" stroke-width="1.300"/></svg>
           <input type="text" placeholder="Поиск" aria-label="Поиск Windows">
           <svg class="temple" viewBox="0 0 78 40">
               <circle cx="20" cy="14" r="12" fill="#bfe9f5"/><circle cx="10" cy="21" r="9" fill="#a9e0f0"/><circle cx="64" cy="14" r="11" fill="#c9eef8"/><circle cx="30" cy="8" r="8" fill="#c9eef8"/>
               <path d="M0 40l22-26 14-5h22l12 18 8 8v5z" fill="#c98f56"/>
               <path d="M22 14L0 40h20l16-29z" fill="#dba46a"/><path d="M57 9l14 18 7 13H60L50 12z" fill="#a96a48"/>
               <path d="M27 4h35v8H27z" fill="#dcc190"/><path d="M27 2h35v3H27z" fill="#efe0b8"/><path d="M34 0h22v3H34z" fill="#d9bd86"/>
               <path d="M38 12h10l4 28H33z" fill="#e0ba86"/><path d="M37 16h12M37 20h12M36 24h14M35 28h15M35 32h16M34 36h17" stroke="#b98a55"/>
               <path d="M17 21h3v4h-3zM21 21h3v4h-3zM25 21h3v4h-3zM46 6h3v4h-3zM53 6h3v4h-3z" fill="#5d3823"/>
               <path d="M0 40q2-10 12-9l12 5 2 4zM50 40q0-14 12-15 10 4 14 15z" fill="#3f7d1a"/><path d="M2 36q10-5 20 1M54 28q12 0 16 10" stroke="#8cc63a" stroke-width="3" fill="none"/>
               <path d="M26 11q6-4 12 0zM55 11q5-3 8 1z" fill="#5f9e2a"/><path d="M48 10l-2 8 6 8-4 6 4 8" stroke="#f3dfb8" stroke-width="2" fill="none"/>
           </svg>
       </div>
       <div class="apps">
           <button aria-label="Представление задач"><svg viewBox="0 0 24 24"><path d="M5 4v4h9V4M5 20v-4h9v4M5.500 9.500h8v5h-8zM18.500 4v5M18.500 14v6" fill="none" stroke="#fff" stroke-width="1.200"/><path d="M17 9h3v4h-3z" fill="#fff"/></svg></button>
           <button aria-label="Edge"><svg viewBox="0 0 24 24"><circle cx="12" cy="12" r="12" fill="#1673c4"/><path d="M0 11Q2 0 12 0t12 10q0 6-7 6-4 0-3-3 1-5-5-6-6 0-9 4z" fill="#2fa9d8"/><path d="M12 0q12 0 12 10 0 6-7 6-3 0-3-2 5-2 3-7-4-5-12-4 3-3 7-3z" fill="#5fd68a"/><path d="M9 8q-4 5 1 10 5 4 12 0-4 6-10 6-8-1-9-8 1-6 6-8z" fill="#0d4f9c"/></svg></button>
           <button class="run" aria-label="Проводник"><svg viewBox="0 0 24 24"><path d="M1 3h9l2 2h11v16H1z" fill="#fdd667"/><path d="M1 3h9l1 3H1z" fill="#e09f1f"/><path d="M5 21v-8h14v8h-4v-4H9v4z" fill="#3f9be0"/></svg></button>
           <button aria-label="Store"><svg viewBox="0 0 24 24"><path d="M7 6V2h10v4" fill="none" stroke="#3cb8e8" stroke-width="2"/><rect x="1" y="5" width="22" height="19" rx="3" fill="#f3f3f3"/><path d="M7 9h4.500v4.500H7z" fill="#e8502c"/><path d="M12.500 9H17v4.500h-4.500z" fill="#7fb93a"/><path d="M7 14.500h4.500V19H7z" fill="#2ba5e8"/><path d="M12.500 14.500H17V19h-4.500z" fill="#f7b618"/></svg></button>
           <button aria-label="Outlook"><svg viewBox="0 0 24 24"><path d="M2 9L13 1l10 8v11q0 3-3 3H6q-4 0-4-4z" fill="#2fa8f2"/><path d="M8 5l5-4 10 8-11 8z" fill="#3a60d8"/><path d="M23 9v11l-3 3H8z" fill="#56d0fa"/><rect y="10" width="12" height="12" rx="2" fill="#1160c0"/><circle cx="6" cy="16" r="3" fill="none" stroke="#fff" stroke-width="1.800"/></svg></button>
           <button aria-label="Firefox"><svg viewBox="0 0 24 24"><circle cx="12" cy="12" r="12" fill="#8018dc"/><path d="M12 11.500q-3-4-6-3-3 1-2 4 2 3 5 1l6-4q4-2 5 1 0 3-3 3-3 0-5-2z" fill="none" stroke="#fff" stroke-width="2.600"/><circle cx="18" cy="18" r="5.500" fill="#ff8a2a"/><circle cx="18" cy="18" r="2.500" fill="#8c35d8"/></svg></button>
           <button aria-label="WordPad"><svg viewBox="0 0 24 24"><path d="M4 2h16v20H5z" fill="#b9dcf2"/><path d="M3 1h17v3H3z" fill="#58748c"/><path d="M5 15L9 6l4 9M6 12h6" stroke="#f08a2c" stroke-width="2" fill="none"/><path d="M14 9h4M14 12h4M6 18h12" stroke="#5a8ab0"/><path d="M3 20h18l1 2H4z" fill="#f0f0f0"/></svg></button>
           <button class="run current" aria-label="AutoCAD"><svg viewBox="0 0 24 24"><path d="M2 1h21v17H2z" fill="#e51050"/><path d="M2 18h21v5H4z" fill="#7b0f2e"/><text x="12" y="14" class="acad">A</text><text x="13" y="22" class="cad">CAD</text></svg></button>
           <button class="run" aria-label="Total Commander"><svg viewBox="0 0 24 24"><path d="M0 0h23v23H2l-2-2z" fill="#2444c8"/><path d="M6 0h12v9H6z" fill="#c8ccd4"/><path d="M11 1h4v7h-4z" fill="#26409c"/><path d="M3 11h18v12H3z" fill="#fff"/><path d="M4 14h16M4 17h16M4 20h8" stroke="#e88080"/><path d="M14 19h5v3h-5z" fill="#555"/></svg></button>
           <button class="run" aria-label="PDF"><svg viewBox="0 0 24 24"><rect width="24" height="23" rx="2" fill="#b51717"/><text x="3" y="8" class="pdf">PDF</text><path d="M9 20l3-6 10-7M12 21l11-8M9 20l6-1 8-5" stroke="#fff" stroke-width="1.600" fill="none"/></svg></button>
           <button class="run" aria-label="Блокнот"><svg viewBox="0 0 24 24"><path d="M7 2l15 2-3 18-17-3z" fill="#6fb8c2"/><path d="M7 2l14 2-6 12L2 19z" fill="#bfe6ea"/><path d="M21 4l2 1-2 17h-3z" fill="#4b5f5c"/></svg></button>
       </div>
       <div class="tray">
           <svg class="t12" viewBox="0 0 12 12"><path d="M1 9l5-6 5 6" fill="none" stroke="#fff" stroke-width="1.300"/></svg>
           <svg viewBox="0 0 16 16"><path d="M5 2.500h10.500v8H4V7M8 11v3M5 14.500h8M.5.500h4v4h-4zM2.500 5v10" fill="none" stroke="#fff"/></svg>
           <svg viewBox="0 0 16 16"><path d="M0 5.500h3l3-3v11l-3-3H0z" fill="none" stroke="#fff"/><path d="M8 6q1 2 0 4M10 4q3 4 0 8" fill="none" stroke="#fff"/><path d="M12 2q5 6 0 12" fill="none" stroke="#777"/></svg>
           <span class="lang">РУС</span>
           <span class="clock">11:01<br>14.01.2026</span>
           <svg class="notif" viewBox="0 0 18 18"><path d="M1 2h16v12h-5l-3 3-3-3H1z" fill="none" stroke="#fff" stroke-width="1.200"/></svg>
           <i class="desk"></i>
       </div>
   </div>

   <!-- Диспетчер свойств слоев -->
   <section class="layers-palette">
       <div class="palette-bar">
           <svg><use href="#xbold"/></svg><svg><use href="#pin"/></svg><svg><use href="#sprocket"/></svg>
           <span class="vert">ДИСПЕТЧЕР СВОЙСТВ СЛОЕВ</span>
           <svg class="tall"><use href="#layer"/><use href="#b-card"/></svg>
       </div>
       <div class="lp-inner">
           <div class="lp-top">
               <span>Текущий слой: 0</span>
               <label class="lp-search"><input type="text" placeholder="Поиск слоя" aria-label="Поиск слоя"><svg><use href="#search"/></svg></label>
           </div>
           <div class="lp-tools">
               <button class="cell"><svg><use href="#folders"/><use href="#b-funnel"/></svg></button>
               <button class="cell"><svg><use href="#folder"/></svg></button>
               <span class="vsep"></span>
               <button class="cell"><svg><use href="#layer"/><use href="#b-card"/></svg></button>
               <div class="lp-edit">
                   <button class="cell"><svg><use href="#layer"/><use href="#b-sun"/></svg></button>
                   <button class="cell"><svg><use href="#layer"/><use href="#b-snow"/></svg></button>
                   <button class="cell"><svg><use href="#layer"/><use href="#b-x"/></svg></button>
                   <button class="cell"><svg><use href="#layer"/><use href="#b-check"/></svg></button>
               </div>
               <button class="cell"><svg><use href="#refresh"/></svg></button>
               <button class="cell"><svg><use href="#hand"/></svg></button>
               <button class="cell"><svg><use href="#gear"/></svg></button>
           </div>
           <div class="lp-main">
               <div class="filters">
                   <div class="f-head">Фильтры<svg><use href="#chev"/></svg></div>
                   <div class="f-tree">
                       <div class="node"><i class="box"></i><i class="dots"></i><svg><use href="#layer"/><use href="#b-check"/></svg><span class="sel">Все</span></div>
                       <div class="node child"><i class="elbow"></i><svg><use href="#folders"/><use href="#b-funnel"/></svg><span>Все испол</span></div>
                       <i class="hbar"></i>
                   </div>
                   <div class="f-foot"><label><input type="checkbox">Инвертир</label><svg><use href="#chev"/></svg></div>
               </div>
               <div class="grid-wrap">
                   <div class="grid-scroll">
                       <table>
                           <colgroup><col class="c18"><col class="c-name"><col class="c18"><col class="c18"><col class="c18"><col class="c18"><col class="c-color"><col class="c-type"><col class="c-weight"><col class="c-trans"><col class="c20"></colgroup>
                           <thead><tr><th>С.</th><th>Имя<i class="up"></i></th><th>В..</th><th>З..</th><th>Б..</th><th>П.</th><th>Цвет</th><th>Тип лин...</th><th>Вес линий</th><th>Прозр...</th><th>З..</th></tr></thead>
                           <tbody id="layers"></tbody>
                       </table>
                   </div>
                   <i class="hbar"></i>
               </div>
               <i class="vbar"></i>
           </div>
           <div class="lp-status">Все: отображается слоев — 15, всего слоев — 15</div>
       </div>
   </section>

   <script>
       const layers = [
           ['0', 'бе...', '#ffffff'], ['Defpoints', 'бе...', '#ffffff'], ['earth', 'зе...', '#00ff00'],
           ['earth_moon', '72', '#66cc00'], ['earth_solar', '110', '#00ff7f'], ['jupiter', '21', '#ff9f7f'],
           ['mars', 'кр...', '#ff0000'], ['mercury', '11', '#ff7f7f'], ['moon', '31', '#ffbf7f'],
           ['neptune', '150', '#007fff'], ['saturn', '40', '#ffbf00'], ['solar', '50', '#ffff00']
       ];

       const icon = (id, cls = '') => `<svg class="${cls}"><use href="#${id}"/></svg>`;

       document.getElementById('layers').innerHTML = layers.map(([name, label, color], i) => `
           <tr class="${name === 'earth' ? 'selected' : ''}">
               <td>${icon(i === 0 ? 'check' : 'sheet')}</td>
               <td>${name}</td>
               <td>${icon('bulb')}</td><td>${icon('sun')}</td><td>${icon('lock')}</td>
               <td>${icon('print', name === 'Defpoints' ? 'off' : '')}</td>
               <td><b class="chip" style="background:${color}"></b>${label}</td>
               <td>Continu...</td>
               <td><b class="lw ${i > 1 ? 'thick' : ''}"></b>${i > 1 ? '2.00...' : 'По у...'}</td>
               <td>0</td>
               <td>${icon('vpfreeze')}</td>
           </tr>`).join('');

       const groups = {
           'Общие': [
               ['Цвет', '<b class="swatch"></b>ПоСлою'], ['Слой', 'earth'], ['Тип линий', '<b class="stroke"></b>ПоСлою'],
               ['Масштаб типа линий', '1'], ['Стиль печати', 'ПоЦвету', 'muted'], ['Вес линий', '<b class="stroke thick"></b>ПоСлою'],
               ['Прозрачность', 'ПоСлою'], ['Гиперссылка', '']
           ],
           '3D-визуализация': [['Материал', 'Глобальный']],
           'Геометрия': [
               ['Текущая вершина', '1'], ['Вершина X', '-59010388.25816772'], ['Вершина Y', '134162897.4769654'],
               ['Вершина Z', '12117.55760203'], ['Длина', '146567080.6444259', 'muted']
           ],
           'Разное': [['Сглаживание', 'Нет'], ['Замкнуто', 'Нет']]
       };

       document.getElementById('propsList').innerHTML = Object.entries(groups).map(([title, rows]) => `
           <div class="group">
               <h3>${title}<i class="caret wide"></i></h3>
               <table>${rows.map(r => `<tr><th>${r[0]}</th><td class="${r[2] || ''}"><div>${r[1]}</div></td></tr>`).join('')}</table>
           </div>`).join('');
   </script>
</body>
</html>
```
FILE: styles.css
```css
* { box-sizing: border-box; }
body {
    margin: 0;
    height: 100vh;
    display: flex;
    flex-direction: column;
    overflow: hidden;
    background-color: #222933;
    color: #e2e5ea;
    font: 11px/16px "Open Sans", "Noto Sans", sans-serif;
}
button {
    padding: 0;
    border: none;
    background: none;
    color: inherit;
    font: inherit;
    cursor: pointer;
}
input, select { font: inherit; color: inherit; }
svg { width: 16px; height: 16px; flex: none; display: block; }
p { margin: 0; }
.sprite { position: absolute; width: 0; height: 0; }

/* Общие мелочи */
.cell { width: 24px; height: 24px; display: flex; align-items: center; justify-content: center; flex: none; }
.caret { width: 12px; height: 12px; flex: none; display: inline-flex; align-items: center; justify-content: center; }
.caret::before { content: ""; border: 3px solid transparent; border-top: 4px solid #dcdcdc; border-bottom: 0; }
.caret.wide::before { border-width: 5px 4px 0; }
.caret.dim::before { border-top-color: #7c828c; }
.caret.grey::before { border-top-color: #666; }
.vsep { width: 1px; height: 22px; background: #4a5466; }
.swatch { width: 14px; height: 14px; flex: none; background: #00ff00; border: 1px solid #e8e8e8; }
.stroke { width: 64px; height: 1px; background: #f4f4f4; flex: none; }
.stroke.thick { height: 6px; }
.slash { width: 24px; height: 20px; background: linear-gradient(112deg, transparent 11px, #4a5466 11px, #4a5466 13px, transparent 13px); }
.vert { writing-mode: vertical-rl; transform: rotate(180deg); white-space: nowrap; font-size: 12px; line-height: 16px; }
.grip { width: 11px; height: 4px; background: repeating-linear-gradient(90deg, #c8ccd2 0 1px, transparent 1px 2px); opacity: .8; }

/* Заголовок */
.titlebar { height: 28px; display: flex; align-items: center; flex: none; font-size: 12px; }
.quick { display: flex; align-items: center; flex: 0 0 709px; }
.logo { width: 24px; height: 22px; margin-left: 3px; background: #e51050; border-bottom: 2px solid #8d0f34; color: #fff; font-size: 15px; font-weight: bold; line-height: 18px; }
.logo-caret { margin-right: 6px; }
.quick .caret.more { width: 17px; flex-direction: column; }
.quick .caret.more::after { content: ""; order: -1; width: 8px; height: 1px; background: #dcdcdc; margin-bottom: 3px; }
.share { display: flex; align-items: center; gap: 4px; margin-left: 4px; color: #8cc8f8; }
.doc-title { flex: 1; display: flex; gap: 8px; white-space: nowrap; }
.info { display: flex; align-items: center; }
.tri-right { border: 4px solid transparent; border-left: 5px solid #dcdcdc; border-right: 0; margin-right: 6px; }
.help-search { width: 178px; height: 20px; padding: 0 2px; background: #464f61; border: none; font-style: italic; font-size: 11px; }
.help-search::placeholder { color: #b4bac4; opacity: 1; }
.signin { display: flex; align-items: center; gap: 4px; margin-left: 4px; white-space: nowrap; }
.signin .caret { margin-left: -4px; }
.info .vsep { margin: 0 3px 0 7px; }
.win-controls { display: flex; padding-left: 61px; }
.win-controls button { width: 46px; display: flex; justify-content: center; }
.win-controls svg, .doc-controls svg { width: 12px; height: 12px; }

/* Меню */
.menubar { height: 21px; display: flex; flex: none; align-items: center; padding: 2px 0 0 2px; border-bottom: 1px solid #3b4453; color: #b8bcc4; }
.menubar > button { padding: 0 12px; }
.menubar > button:nth-child(even) { padding-left: 13px; }
.doc-controls { margin-left: auto; display: flex; }
.doc-controls button { width: 32px; display: flex; justify-content: center; }

/* Лента */
.ribbon-tabs { height: 24px; flex: none; display: flex; align-items: flex-end; }
.tab { width: 56px; height: 20px; margin-left: 3px; background: #3b4453; padding-left: 10px; text-align: left; }
.tabs-end { margin-left: 637px; display: flex; align-items: center; height: 20px; }
.collapse { width: 16px; height: 8px; margin: 0 0 0 31px; background: #f0f0f0; display: flex; align-items: center; justify-content: center; }
.collapse::before { content: ""; border: 3px solid transparent; border-bottom: 3px solid #333; border-top: 0; }
.ribbon { height: 99px; flex: none; display: flex; background: #3b4453; padding-right: 1px; }
.panel { flex: none; display: flex; flex-direction: column; border-right: 1px solid #222933; }
.panel:last-child { border-right: none; }
.panel-body { height: 79px; padding: 5px 2px 0; display: flex; justify-content: space-between; }
.panel-title { height: 20px; display: flex; align-items: center; justify-content: center; gap: 4px; position: relative; }
.launcher { width: 8px; height: 8px; position: absolute; right: 4px; }
.draw { flex: 1; }
.annot { width: 187px; }
.layers { width: 271px; }
.block { width: 200px; }
.properties { width: 243px; }
.groups { width: 75px; }
.utils { width: 106px; }
.clipboard { width: 111px; }
.view { width: 72px; }
.big { height: 72px; padding-top: 3px; display: block; text-align: center; line-height: 15px; white-space: nowrap; }
.big > svg { width: 32px; height: 32px; margin: 0 auto 3px; }
.big .caret { display: flex; margin: 0 auto; }
.draw .big { width: 52px; }
.annot .panel-body { justify-content: flex-end; }
.annot .big { width: 48px; }
.annot .stack { width: 76px; }
.layers .big { width: 57px; }
.big.on, .small.on { background: #475d76; outline: 1px solid #6cb8f5; outline-offset: -1px; }
.block .big { width: 46px; }
.block .big + .big { width: 106px; }
.detect-caret { width: 8px; margin-top: 48px; }
.block .stack, .clipboard .stack { width: 36px; }
.properties .big { width: 80px; }
.groups .big { width: 46px; }
.utils .big { width: 76px; }
.clipboard .big { width: 68px; }
.view .panel-body { justify-content: center; }
.stack { display: flex; flex-direction: column; }
.small { height: 24px; min-width: 24px; padding: 0 4px; display: flex; align-items: center; gap: 4px; }
.small .caret { width: 8px; }
.combo { height: 22px; display: flex; align-items: center; background: #4a5568; border: 1px solid #2b323e; padding-left: 6px; font-size: 12px; }
.combo select { flex: 1; min-width: 0; height: 20px; appearance: none; border: none; background: transparent; padding: 0 0 0 5px; }
.combo > .caret { pointer-events: none; }
.layer-tools { width: 208px; }
.layer-combo { height: 23px; gap: 3px; padding-left: 3px; }
.layer-combo .swatch { margin-left: 1px; }
.icon-row { display: flex; height: 24px; align-items: center; gap: 8px; padding-left: 4px; }
.prop-rows { width: 156px; display: flex; flex-direction: column; gap: 2px; }
.prop-row { display: flex; align-items: center; gap: 3px; }
.prop-row .combo { flex: 1; min-width: 0; }
.prop-row .stroke + select { padding-left: 2px; }

.file-tabs { height: 27px; flex: none; display: flex; align-items: center; padding: 0 16px; gap: 4px; }

/* Рабочая область */
.workspace { flex: 1; min-height: 0; display: flex; position: relative; border-top: 4px solid #3b4453; border-bottom: 4px solid #3b4453; background: #222933; }
.dock { display: flex; flex-direction: column; align-items: center; background: #3b4453; }
.left { width: 22px; margin: 4px 2px 4px 1px; }
.left .grip, .calc-dock .grip { margin-top: 3px; }
.left .vert, .calc-dock .vert { margin: auto; }
.center { flex: 1; min-width: 0; display: flex; flex-direction: column; }
.viewport { flex: 1; min-height: 0; background: #212830; position: relative; overflow: hidden; }
.vp-label { position: absolute; left: 3px; top: 5px; font-size: 12px; }
.scene { width: 100%; height: 100%; }
.command { height: 64px; flex: none; display: flex; border-top: 4px solid #3b4453; background: #2e3440; }
.cmd-side { width: 25px; display: flex; flex-direction: column; align-items: center; justify-content: space-between; padding: 5px 0 4px; }
.cmd-side svg:not(.w) { width: 9px; height: 9px; }
.cmd-main { flex: 1; min-width: 0; border-top: 1px solid #222933; display: flex; flex-direction: column; font-family: "DejaVu Sans Mono", monospace; font-size: 12px; }
.cmd-log { height: 37px; overflow: hidden; background: #c8c8c8; color: #000; display: flex; flex-direction: column; justify-content: flex-end; padding: 0 2px 1px; line-height: 15px; }
.cmd-log p { flex: none; white-space: nowrap; }
.cmd-input { height: 21px; margin-top: 1px; background: #fff; display: flex; align-items: center; padding-left: 4px; border-bottom: 1px solid #222933; }
.cmd-input svg { height: 12px; }
.cmd-input input { flex: 1; border: none; background: none; font-style: italic; color: #333; padding: 0 4px; }
.cmd-input input::placeholder { color: #777; opacity: 1; }
.dock-right { width: 25px; display: flex; flex-direction: column; padding: 4px 0 0 3px; }
.calc-dock { height: 394px; }
.props-dock { flex: 1; background: #2e3440; margin: 2px 0 0 -3px; padding-left: 3px; }
.props-dock .vert { margin-top: 174px; }

/* Палитра свойств */
.props-palette { position: absolute; right: 26px; top: 1px; bottom: 1px; width: 616px; background: #2e3440; display: flex; padding: 2px 0 2px 4px; border: solid #222933; border-width: 0 1px 1px 0; }
.props-inner { flex: 1; background: #3b4453; border: 1px solid #222933; border-radius: 3px; padding: 12px 7px; }
.props-head { display: flex; align-items: center; margin-bottom: 3px; }
.type-combo { width: 497px; height: 24px; padding-left: 0; margin-right: 4px; font-size: 11px; }
.type-combo select { padding-left: 3px; }
.props-list { margin-left: 4px; margin-right: 12px; }
.group { margin-bottom: 2px; }
.group h3 { margin: 0; height: 20px; display: flex; align-items: center; justify-content: space-between; background: #2e3440; padding: 0 6px 0 7px; font-size: 11px; }
.group table { width: calc(100% - 17px); margin-left: 17px; border-collapse: collapse; table-layout: fixed; font-size: 11px; }
.group tr { height: 19px; }
.group th, .group td { border: 1px solid #2c3340; padding: 0 3px; line-height: 18px; height: 19px; font-weight: normal; text-align: left; white-space: nowrap; }
.group th { width: 253px; padding-left: 6px; color: #c8ccd4; }
.group td { color: #f4f5f7; }
.group td.muted { color: #868d99; }
.group td div { display: flex; align-items: center; height: 18px; gap: 5px; }
.palette-bar { width: 21px; flex: none; display: flex; flex-direction: column; align-items: center; gap: 9px; padding: 4px 0 0; color: #e8e8e8; }
.palette-bar svg { width: 10px; height: 10px; }
.palette-bar .tall { width: 14px; height: 16px; }
.palette-bar .vert { margin-top: auto; font-size: 12px; }

/* Строка состояния */
.statusbar { height: 29px; flex: none; display: flex; align-items: center; padding: 0 2px 3px 16px; font-size: 12px; }
.layout-tabs { display: flex; align-items: center; margin-left: 9px; height: 24px; font-size: 11px; }
.layout-tabs button { padding: 0 0 0 7px; }
.layout-tabs .active { width: 80px; height: 24px; padding: 0; background: #3b4453; clip-path: polygon(10px 0, 100% 0, 70px 100%, 0 100%); font-weight: bold; }
.layout-tabs .slash { width: 24px; margin: 0 -4px 0 0; }
.layout-tabs .plus { padding: 0 2px 0 4px; }
.layout-tabs .plus svg { width: 14px; height: 14px; }
.status-groups { margin-left: auto; display: flex; gap: 3px; }
.sg { display: flex; align-items: center; background: #3b4453; height: 24px; }
.sg button { min-width: 24px; height: 24px; display: flex; align-items: center; justify-content: center; white-space: nowrap; }
.sg .caret.wide { width: 15px; }
.sg .lit { background: #5f8fc4; }
.sg .lit + .lit { margin-left: 1px; }
.sg .txt { width: 56px; }
.sg .half { width: 8px; }
.sg .scale { width: 36px; }
.sg .units { width: 88px; }
.roomy button { min-width: 28px; }

/* Панель задач */
.taskbar { height: 40px; flex: none; display: flex; background: #1d1d1d; }
.start { width: 48px; display: flex; align-items: center; justify-content: center; }
.task-search { width: 288px; display: flex; align-items: center; background: #f2f2f2; border: 1px solid #c4c4c4; padding-left: 11px; }
.task-search .loupe { width: 18px; height: 18px; }
.task-search input { flex: 1; min-width: 0; border: none; background: none; padding: 0 0 0 10px; font-size: 15px; color: #222; }
.task-search input::placeholder { color: #333; opacity: 1; }
.temple { width: 78px; height: 39px; }
.apps { display: flex; gap: 1px; padding-left: 1px; }
.apps button { width: 48px; display: flex; align-items: center; justify-content: center; position: relative; }
.apps svg { width: 24px; height: 24px; }
.apps .run::after { content: ""; position: absolute; left: 4px; right: 4px; bottom: 0; height: 2px; background: #76b9ed; }
.apps .current { background: #4b4b4b; }
.apps .current::after { left: 0; right: 0; }
.acad { font: bold 13px "Open Sans", sans-serif; fill: #fff; text-anchor: middle; }
.cad { font: bold 5px "Open Sans", sans-serif; fill: #fff; text-anchor: middle; }
.pdf { font: 7px "Open Sans", sans-serif; fill: #fff; }
.tray { margin-left: auto; display: flex; align-items: center; font-size: 12px; }
.tray svg { margin-right: 8px; }
.tray .t12 { width: 12px; height: 12px; margin-right: 10px; }
.lang { margin: 0 0 0 3px; }
.clock { width: 76px; text-align: center; line-height: 18px; font-size: 11px; }
.tray .notif { width: 18px; height: 18px; margin: 0 19px 0 8px; }
.desk { width: 5px; height: 40px; border-left: 1px solid #6a6a6a; }

/* Диспетчер слоев */
.layers-palette { position: absolute; left: 51px; top: 51px; width: 645px; height: 345px; display: flex; background: #2e3440; padding: 3px 2px 1px 0; }
.layers-palette .palette-bar { padding-top: 3px; gap: 10px; }
.layers-palette .vert { color: #b8bcc4; font-size: 11px; }
.layers-palette .palette-bar .tall { width: 16px; }
.lp-inner { flex: 1; min-width: 0; background: #3b4453; border: 1px solid #222933; border-radius: 3px; padding-left: 2px; display: flex; flex-direction: column; }
.lp-top { height: 28px; display: flex; justify-content: space-between; padding: 6px 2px 0 4px; }
.lp-top > span { margin-top: 4px; font-size: 12px; }
.lp-search { width: 125px; height: 16px; background: #4a5568; display: flex; align-items: center; justify-content: space-between; }
.lp-search input { width: 105px; height: 16px; border: none; background: none; padding: 0; }
.lp-search input::placeholder { color: #b4bac4; opacity: 1; }
.lp-search svg { width: 14px; height: 14px; }
.lp-tools { height: 24px; display: flex; align-items: center; padding-right: 9px; }
.lp-tools .vsep { margin: 0 1px; background: #222933; }
.lp-edit { flex: 1; display: flex; margin-left: 43px; }
.lp-edit .cell { width: 23px; }
.lp-main { display: flex; height: 252px; margin-top: 1px; }
.filters { width: 116px; height: 252px; border: 1px solid #2c3340; margin-right: 4px; display: flex; flex-direction: column; }
.f-head { height: 27px; display: flex; align-items: center; justify-content: space-between; padding: 0 9px 0 5px; border-bottom: 1px solid #2c3340; }
.f-head svg, .f-foot svg { width: 12px; height: 10px; }
.f-tree { flex: 1; padding: 6px 0 0 7px; display: flex; flex-direction: column; overflow: hidden; }
.node { display: flex; align-items: center; height: 18px; flex: none; white-space: nowrap; }
.node svg { width: 12px; height: 12px; margin-right: 5px; }
.node .sel { background: #7688a8; padding: 0 2px; line-height: 18px; }
.box { width: 9px; height: 9px; border: 1px solid #dcdcdc; background: linear-gradient(#dcdcdc, #dcdcdc) center / 5px 1px no-repeat; }
.dots { width: 7px; border-top: 1px dotted #aaa; margin-right: 2px; }
.elbow { width: 12px; height: 14px; margin: -10px 2px 0 23px; border: dotted #aaa; border-width: 0 0 1px 1px; }
.child svg { margin-right: 6px; }
.hbar, .vbar { background: #5b6678; border-radius: 2px; flex: none; }
.f-tree .hbar { width: 60px; height: 5px; margin: auto 0 6px -3px; }
.f-foot { height: 28px; border-top: 1px solid #2c3340; display: flex; align-items: center; justify-content: space-between; padding: 0 9px 0 4px; }
.f-foot label { display: flex; align-items: center; gap: 5px; }
.f-foot input { width: 12px; height: 12px; margin: 0; appearance: none; background: #fff; border: 1px solid #222; }
.grid-wrap { width: 478px; display: flex; flex-direction: column; }
.grid-scroll { height: 236px; overflow: hidden; }
.grid-wrap .hbar { width: 282px; height: 5px; margin: 5px 0 0 4px; }
.vbar { width: 5px; height: 177px; margin: 4px 0 0 7px; }
.grid-scroll table { width: 478px; border-collapse: separate; border-spacing: 0; table-layout: fixed; }
.c18 { width: 18px; }
.c20 { width: 20px; }
.c-name { width: 134px; }
.c-color { width: 48px; }
.c-type { width: 64px; }
.c-weight { width: 69px; }
.c-trans { width: 53px; }
.grid-scroll th { height: 23px; padding: 0 0 0 4px; background: #444d60; border-right: 1px solid #2c3340; font-weight: normal; text-align: left; white-space: nowrap; overflow: hidden; }
.grid-scroll td { height: 18px; padding: 0 0 0 3px; line-height: 18px; white-space: nowrap; overflow: hidden; }
.grid-scroll td:nth-child(2) { border-right: 2px solid #2c3340; }
.grid-scroll td:nth-child(1), .grid-scroll td:nth-child(n+3):nth-child(-n+6) { padding-left: 2px; }
.grid-scroll tr.selected td { background: #7688a8; }
.grid-scroll td svg { width: 14px; height: 14px; }
.grid-scroll .off { opacity: .4; filter: grayscale(1); }
.up { float: right; margin: 7px 2px 0 0; border: 4px solid transparent; border-bottom: 4px solid #e0e0e0; border-top: 0; }
.chip { display: inline-block; vertical-align: -2px; width: 12px; height: 12px; margin-right: 4px; border: 1px solid #d8d8d8; }
.lw { display: inline-block; vertical-align: middle; width: 22px; height: 1px; margin-right: 6px; background: #f4f4f4; }
.lw.thick { height: 6px; }
.lp-status { padding: 15px 0 0 4px; }
```
